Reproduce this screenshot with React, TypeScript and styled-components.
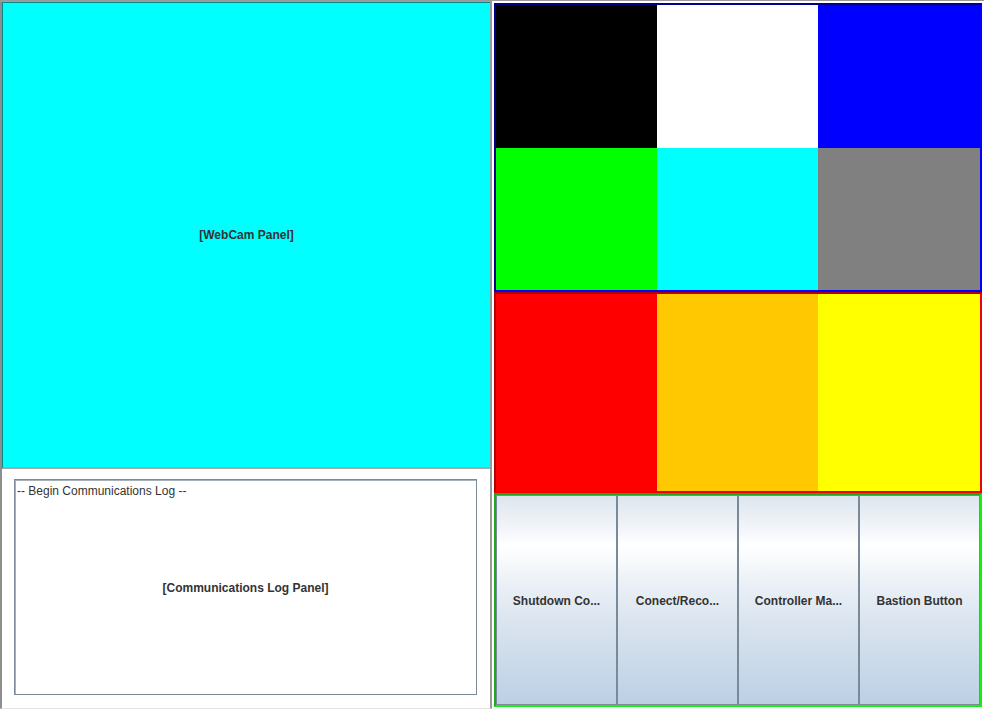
import React from 'react';
import styled, { createGlobalStyle } from 'styled-components';

const GlobalStyle = createGlobalStyle`
    html, body {
        margin: 0;
        padding: 0;
        background: #ffffff;
    }
    * {
        box-sizing: border-box;
    }
`;

const Frame = styled.div`
    width: 984px;
    height: 711px;
    display: flex;
    flex-direction: row;
    background: #ffffff;
    border-top: 1px solid #9a9a9a;
    font-family: "Liberation Sans", Arial, sans-serif;
    font-size: 12px;
    color: #333333;
    overflow: hidden;
`;

const LeftColumn = styled.div`
    width: 492px;
    height: 708px;
    display: flex;
    flex-direction: column;
    border-left: 2px solid #8e8e8e;
    border-top: 1px solid #a0a0a0;
    border-right: 2px solid #9a9a9a;
    border-bottom: 1px solid #e2e2e2;
`;

const WebCamPanel = styled.div`
    height: 467px;
    background: #00ffff;
    border-left: 1px solid #008c8c;
    border-top: 1px solid #008c8c;
    border-bottom: 2px solid #a6a6a6;
    display: flex;
    align-items: center;
    justify-content: center;
    font-weight: bold;
`;

const CommsPanel = styled.div`
    flex: 1;
    background: #ffffff;
    padding: 10px 13px 13px 12px;
    display: flex;
`;

const LogArea = styled.div`
    flex: 1;
    border: 1px solid #7a8a99;
    box-shadow: inset 1px 1px 0 #a8b0b8;
    position: relative;
    display: flex;
    align-items: center;
    justify-content: center;
    font-weight: bold;
    padding-top: 2px;
`;

const LogHeader = styled.span`
    position: absolute;
    left: 2px;
    top: 4px;
    font-weight: normal;
`;

const Gap = styled.div`
    width: 2px;
`;

const RightColumn = styled.div`
    width: 488px;
    padding-top: 2px;
    display: flex;
    flex-direction: column;
`;

const ColorPanel = styled.div<{ $dark: string; $light: string; $rows: number; $h: number }>`
    height: ${p => p.$h}px;
    display: grid;
    grid-template-columns: 161px 161px 1fr;
    grid-template-rows: repeat(${p => p.$rows}, 1fr);
    border: 2px solid ${p => p.$light};
    border-top-color: ${p => p.$dark};
    border-left-color: ${p => p.$dark};
`;

const Swatch = styled.div<{ $c: string }>`
    background: ${p => p.$c};
`;

const ButtonPanel = styled.div`
    height: 214px;
    display: flex;
    border: 2px solid #14f014;
    border-top-color: #1fa81f;
    border-left-color: #1fa81f;
    background: #7a8a99;
`;

const PanelButton = styled.button`
    flex: 1;
    margin: 0;
    padding: 2px 4px 0;
    border: 1px solid #7a8a99;
    background: linear-gradient(to bottom, #dde5ee 0%, #f4f7fa 17%, #ffffff 24%, #e8eef5 45%, #d3dfec 70%, #bcd0e5 100%);
    font-family: "Liberation Sans", Arial, sans-serif;
    font-size: 12px;
    font-weight: bold;
    color: #333333;
    white-space: nowrap;
    cursor: pointer;
`;

const topColors = ['#000000', '#ffffff', '#0000ff', '#00ff00', '#00ffff', '#808080'];
const midColors = ['#ff0000', '#ffc800', '#ffff00'];
const buttons = ['Shutdown Co...', 'Conect/Reco...', 'Controller Ma...', 'Bastion Button'];

export default function App() {
    return (
        <>
            <GlobalStyle />
            <Frame>
                <LeftColumn>
                    <WebCamPanel>[WebCam Panel]</WebCamPanel>
                    <CommsPanel>
                        <LogArea>
                            <LogHeader>-- Begin Communications Log --</LogHeader>
                            [Communications Log Panel]
                        </LogArea>
                    </CommsPanel>
                </LeftColumn>
                <Gap />
                <RightColumn>
                    <ColorPanel $dark="#00008c" $light="#0000ff" $rows={2} $h={289}>
                        {topColors.map((c, i) => <Swatch key={i} $c={c} />)}
                    </ColorPanel>
                    <ColorPanel $dark="#b00000" $light="#ee0000" $rows={1} $h={201}>
                        {midColors.map((c, i) => <Swatch key={i} $c={c} />)}
                    </ColorPanel>
                    <ButtonPanel>
                        {buttons.map(b => <PanelButton key={b}>{b}</PanelButton>)}
                    </ButtonPanel>
                </RightColumn>
            </Frame>
        </>
    );
}
